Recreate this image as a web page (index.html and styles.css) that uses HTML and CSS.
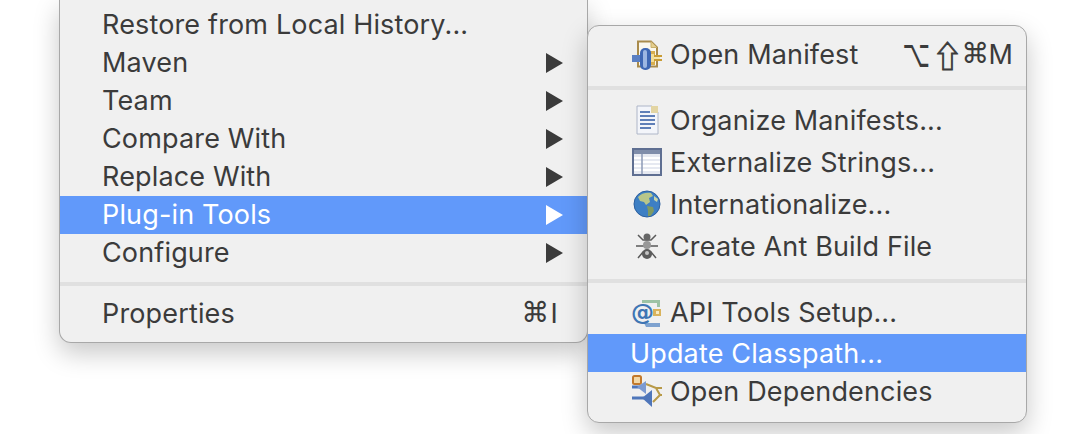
FILE: index.html
```html
<!DOCTYPE html>
<html>
<head>
  <meta charset="UTF-8">
  <link rel="stylesheet" href="styles.css">
</head>
<body>
  <div class="menu main-menu">
    <div class="item"><span class="label">Restore from Local History...</span></div>
    <div class="item"><span class="label">Maven</span><span class="arrow"></span></div>
    <div class="item"><span class="label">Team</span><span class="arrow"></span></div>
    <div class="item"><span class="label">Compare With</span><span class="arrow"></span></div>
    <div class="item"><span class="label">Replace With</span><span class="arrow"></span></div>
    <div class="item selected"><span class="label">Plug-in Tools</span><span class="arrow"></span></div>
    <div class="item"><span class="label">Configure</span><span class="arrow"></span></div>
    <div class="separator"></div>
    <div class="item"><span class="label">Properties</span><span class="shortcut short-i"><span class="sym cmd">⌘</span>I</span></div>
  </div>

  <div class="menu sub-menu">
    <div class="sub-item first">
      <svg class="icon" viewBox="0 0 30 30">
        <path d="M6 1.500H19L25 7.500V26.500H6Z" fill="#fbf8ee" stroke="#a98b4c" stroke-width="2"/>
        <path d="M19 1.500V7.500H25" fill="#e6d08e" stroke="#c9b06c"/>
        <rect x="15" y="11" width="8" height="14" fill="#d8ae4e"/>
        <rect x="19" y="14" width="3" height="8" fill="#f3dd95"/>
        <rect x="22" y="15" width="8" height="2" fill="#c99c35"/>
        <rect x="22" y="19" width="8" height="2" fill="#c99c35"/>
        <rect x="22" y="17" width="6" height="2" fill="#f5e6ad"/>
        <rect x="0" y="15" width="9" height="7" fill="#5b80c4"/>
        <rect x="8" y="8" width="11" height="22" rx="5" fill="#3f68b4"/>
        <rect x="11" y="10" width="4" height="18" rx="2" fill="#9db7e2"/>
      </svg>
      <span class="label">Open Manifest</span>
      <span class="shortcut short-m"><span class="sym opt">⌥</span><span class="sym shift">⇧</span><span class="sym cmd">⌘</span>M</span>
    </div>
    <div class="separator sub-sep"></div>
    <div class="sub-item">
      <svg class="icon" viewBox="0 0 30 30">
        <path d="M5 1H20L26 7V29H5Z" fill="#f3f5fa" stroke="#aeb6c8"/>
        <path d="M19 1H26V8H19Z" fill="#e3d5a3"/>
        <path d="M8 7H18M8 11H23M8 15H23M8 19H23M8 23H19" stroke="#5f7fb8" stroke-width="2"/>
      </svg>
      <span class="label">Organize Manifests...</span>
    </div>
    <div class="sub-item">
      <svg class="icon" viewBox="0 0 30 30">
        <rect x="1" y="2" width="28" height="26" fill="#e6e9f1" stroke="#5f6f92" stroke-width="2"/>
        <rect x="2" y="3" width="26" height="4" fill="#7f8daa"/>
        <path d="M2 11H28M2 15H28M2 19H28M2 23H28" stroke="#fff" stroke-width="2"/>
        <path d="M10 7V27" stroke="#8c9ab6" stroke-width="1.500"/>
      </svg>
      <span class="label">Externalize Strings...</span>
    </div>
    <div class="sub-item">
      <svg class="icon" viewBox="0 0 30 30">
        <circle cx="15" cy="15" r="13" fill="#3d7fc4"/>
        <path d="M6 8C9 4 15 3 19 4L21 7 17 9 18 13 14 16 12 13 8 12Z" fill="#b8c68a"/>
        <path d="M15 17 21 18 22 22 18 28 16 27 16 22Z" fill="#7f9a63"/>
        <path d="M22 7 26 10 25 13 22 11Z" fill="#c9d6a8"/>
        <circle cx="15" cy="15" r="13" fill="none" stroke="#2b5f9f"/>
      </svg>
      <span class="label">Internationalize...</span>
    </div>
    <div class="sub-item">
      <svg class="icon" viewBox="0 0 30 30">
        <path d="M6 4 11 9H19L24 4M4 15H26M6 27 11 21H19L24 27" fill="none" stroke="#5a5a5a" stroke-width="1.500"/>
        <circle cx="15" cy="6" r="3.500" fill="#666"/>
        <circle cx="15" cy="14" r="4" fill="#999"/>
        <circle cx="15" cy="23" r="5" fill="#5c5c5c"/>
        <circle cx="15" cy="22" r="2" fill="#c4c4c4"/>
      </svg>
      <span class="label">Create Ant Build File</span>
    </div>
    <div class="separator sub-sep-2"></div>
    <div class="sub-item api">
      <svg class="icon" viewBox="0 0 30 30">
        <path d="M10 2H28V9H25V5H10Z" fill="#9dc3a5"/>
        <rect x="21" y="11" width="8" height="7" fill="#d9b35c"/>
        <rect x="24" y="13" width="3" height="3" fill="#f7ecc4"/>
        <path d="M12 25H28V29H14Z" fill="#7ea2cf"/>
        <text x="-1" y="22" class="at">@</text>
      </svg>
      <span class="label">API Tools Setup...</span>
    </div>
    <div class="sub-item selected plain"><span class="label">Update Classpath...</span></div>
    <div class="sub-item last">
      <svg class="icon icon-dep" viewBox="0 0 30 32">
        <rect x="1" y="1" width="8" height="8" rx="1.500" fill="#f3d9a8" stroke="#c2792c" stroke-width="2"/>
        <path d="M14 9 24 13H30M24 13 28 20H30M28 20 21 27" fill="none" stroke="#b89a48" stroke-width="2"/>
        <path d="M0 12H10M0 23H12" stroke="#4f76ba" stroke-width="3"/>
        <path d="M14 6V19L5 12Z" fill="#7d9bd2"/>
        <path d="M20 15V32L10 23Z" fill="#4f76ba"/>
      </svg>
      <span class="label">Open Dependencies</span>
    </div>
  </div>
</body>
</html>
```

FILE: styles.css
```css
* { box-sizing: border-box; margin: 0; padding: 0; }
html, body {
  height: 100%;
  overflow: hidden;
}
body {
  position: relative;
  background: #fff;
  color: #3b3b3b;
  font-family: "Inter", "Liberation Sans", sans-serif;
  font-size: 27px;
  letter-spacing: 0.15px;
}

.menu {
  background: #f0f0f0;
  border: 1px solid #a8a8a8;
  box-shadow: 0 10px 26px rgba(0, 0, 0, 0.22);
}
.main-menu {
  width: 529px;
  margin-left: 59px;
  padding: 6px 0 9px;
  border-top: none;
  border-radius: 0 0 12px 12px;
}
.sub-menu {
  position: absolute;
  left: 587px;
  top: 25px;
  width: 440px;
  height: 398px;
  border-radius: 12px;
}

.item {
  height: 38px;
  padding-left: 42px;
  padding-right: 24px;
  display: flex;
  align-items: center;
  justify-content: space-between;
}
.selected {
  background: #6199fa;
  color: #fff;
}
.label {
  margin-top: -2px;
}
.arrow {
  width: 0;
  height: 0;
  border-left: 17px solid #3b3b3b;
  border-top: 10px solid transparent;
  border-bottom: 10px solid transparent;
}
.selected .arrow {
  border-left-color: #fff;
}
.separator {
  height: 4px;
  margin: 10px 0 9px;
  background: #e0e0e0;
}
.sub-sep {
  margin: 8px 0 9px;
}
.sub-sep-2 {
  margin: 12px 0 9px;
}

.sub-item {
  height: 42px;
  padding-left: 44px;
  display: flex;
  align-items: center;
  gap: 8px;
}
.sub-item .label {
  margin-top: 0;
}
.sub-item.first .label,
.sub-item.api .label {
  margin-top: -2px;
}
.sub-item.first {
  height: 46px;
  margin-top: 6px;
}
.sub-item.plain {
  height: 38px;
  padding-left: 42px;
}
.sub-item.last {
  height: 38px;
}
.icon {
  width: 30px;
  height: 30px;
  flex: none;
}
.icon-dep {
  height: 32px;
}
.at {
  font-family: "DejaVu Sans", sans-serif;
  font-size: 23px;
  font-weight: bold;
  fill: #3f76b4;
}
.shortcut {
  display: flex;
  align-items: center;
  margin-top: -2px;
  white-space: nowrap;
}
.short-i {
  margin-right: 5px;
}
.short-i .cmd {
  margin-right: 6px;
}
.short-m {
  margin-left: auto;
  margin-right: 13px;
}
.sym {
  display: inline-block;
  font-family: "DejaVu Sans", sans-serif;
  text-align: center;
}
.cmd {
  width: 23px;
  margin-right: 4px;
  font-size: 28px;
  line-height: 1;
}
.opt {
  width: 24px;
  margin-right: 6px;
  font-size: 24px;
  transform: scaleY(1.6);
}
.shift {
  width: 24px;
  margin-right: 5px;
  font-family: "Noto Sans CJK JP", "DejaVu Sans", sans-serif;
  font-size: 30px;
  -webkit-text-stroke: 0.8px #3b3b3b;
}
```
